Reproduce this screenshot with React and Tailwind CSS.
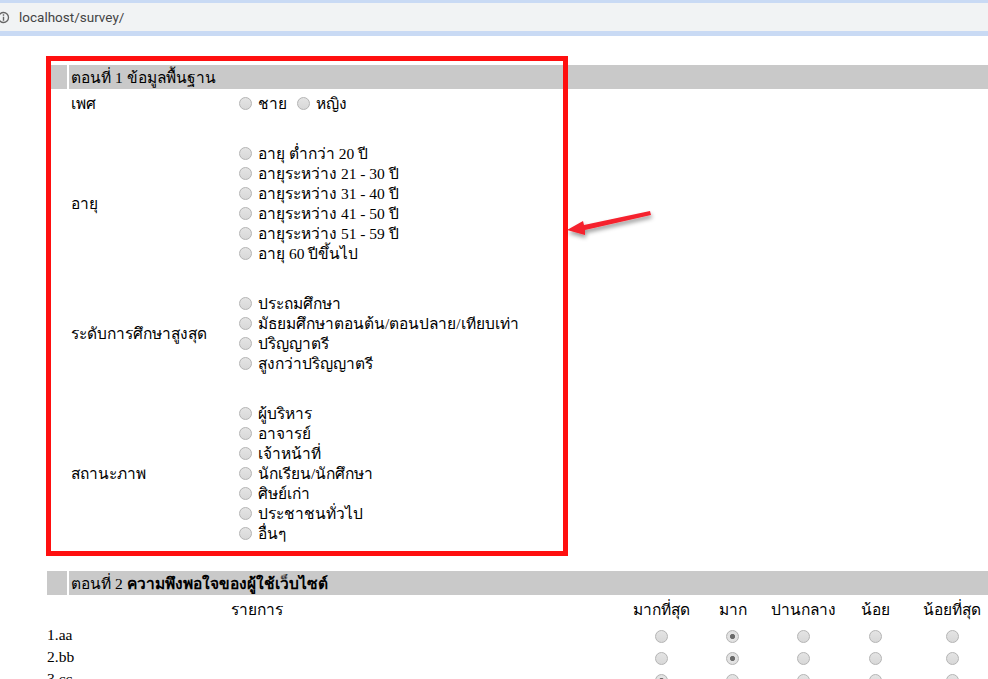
function Radio({ checked, up }) {
  return (
    <span className={"inline-block w-[13px] h-[13px] rounded-full border border-[#b4b4b4] shrink-0 " + (up ? "mb-[2px] " : "mt-[2px] ") + (checked ? "bg-[radial-gradient(circle,#6b6b6b_0,#6b6b6b_28%,#e4e4e4_38%,#dcdcdc_100%)]" : "bg-[linear-gradient(#e4e4e4,#d8d8d8)]")} />
  );
}
function Option({ children }) {
  return (
    <div className="h-5 flex items-center">
      <Radio up />
      <span className="ml-[6px]">{children}</span>
    </div>
  );
}
function Head({ children }) {
  return (
    <div className="flex gap-[2px] h-6">
      <div className="w-[20px] bg-[#c9c9c9]" />
      <div className="flex-1 bg-[#c9c9c9] pl-[2px] leading-[26px]">{children}</div>
    </div>
  );
}
function Group({ label, items }) {
  return (
    <div className="flex items-center mt-[30px]">
      <div className="w-[192px] pl-[24px]">{label}</div>
      <div>
        {items.map((t) => <Option key={t}>{t}</Option>)}
      </div>
    </div>
  );
}
const cols = [
  ["มากที่สุด", "w-[71px]"],
  ["มาก", "w-[71px]"],
  ["ปานกลาง", "w-[71px]"],
  ["น้อย", "w-[72px]"],
  ["น้อยที่สุด", "w-[82px]"],
];
const rows = [
  ["1.aa", 1],
  ["2.bb", 1],
  ["3.cc", 0],
];
export default function App() {
  return (
    <div className="relative w-[988px] h-[679px] overflow-hidden bg-white text-[15.5px] text-black font-['Liberation_Serif','Noto_Sans','DejaVu_Sans',serif]">
      <div className="h-[36px] border-t-[3px] border-b-[5px] border-t-[#c9daf4] border-b-[#c9daf4] bg-[#f1f3f4] flex items-center font-['Roboto','Liberation_Sans',sans-serif] text-[13.5px] text-[#444]">
        <svg width="11" height="13" viewBox="0 0 11 13" className="shrink-0">
          <circle cx="3.5" cy="6.5" r="5" fill="none" stroke="#666" strokeWidth="1.3" />
          <path d="M3.5 3.2v1.5M3.5 5.8v4" stroke="#666" strokeWidth="1.4" />
        </svg>
        <span className="ml-[8px]">localhost/survey/</span>
      </div>
      <div className="pl-[47px] pt-[29px]">
        <Head>ตอนที่ 1 ข้อมูลพื้นฐาน</Head>
        <div className="flex items-center h-5 mt-[5px]">
          <div className="w-[192px] pl-[24px]">เพศ</div>
          <Radio up /><span className="ml-[6px]">ชาย</span>
          <span className="ml-[10px] flex"><Radio up /></span><span className="ml-[6px]">หญิง</span>
        </div>
        <Group label="อายุ" items={["อายุ ต่ำกว่า 20 ปี","อายุระหว่าง 21 - 30 ปี","อายุระหว่าง 31 - 40 ปี","อายุระหว่าง 41 - 50 ปี","อายุระหว่าง 51 - 59 ปี","อายุ 60 ปีขึ้นไป"]} />
        <Group label="ระดับการศึกษาสูงสุด" items={["ประถมศึกษา","มัธยมศึกษาตอนต้น/ตอนปลาย/เทียบเท่า","ปริญญาตรี","สูงกว่าปริญญาตรี"]} />
        <Group label="สถานะภาพ" items={["ผู้บริหาร","อาจารย์","เจ้าหน้าที่","นักเรียน/นักศึกษา","ศิษย์เก่า","ประชาชนทั่วไป","อื่นๆ"]} />
        <div className="mt-[27px]">
          <Head>ตอนที่ 2 <b>ความพึงพอใจของผู้ใช้เว็บไซต์</b></Head>
        </div>
        <div className="flex h-[30px] items-center">
          <div className="w-[420px] text-center shrink-0">รายการ</div>
          <div className="w-[159px] shrink-0" />
          {cols.map(([c, w]) => <div key={c} className={w + " text-center shrink-0"}>{c}</div>)}
        </div>
        <div className="-mt-[1px]">
          {rows.map(([t, sel]) => (
            <div key={t} className="flex h-[22px] items-center">
              <div className="w-[579px] shrink-0">{t}</div>
              {cols.map(([c, w], i) => (
                <div key={c} className={w + " flex justify-center shrink-0"}>
                  <Radio checked={t === "3.cc" ? i === 0 : i === sel} />
                </div>
              ))}
            </div>
          ))}
        </div>
      </div>
      <div className="absolute left-[46px] top-[56px] w-[522px] h-[500px] border-[5px] border-[#ff0f0f] pointer-events-none" />
      <svg className="absolute left-[560px] top-[200px]" width="100" height="45" viewBox="0 0 100 45">
        <defs>
          <filter id="s" x="-20%" y="-50%" width="140%" height="220%">
            <feDropShadow dx="1" dy="3" stdDeviation="2" floodColor="#000" floodOpacity="0.4" />
          </filter>
        </defs>
        <path d="M90 11 L24 25 L23 21 L7 30 L25 35 L25 30 L91 15 Z" fill="#f5222d" filter="url(#s)" />
      </svg>
    </div>
  );
}
